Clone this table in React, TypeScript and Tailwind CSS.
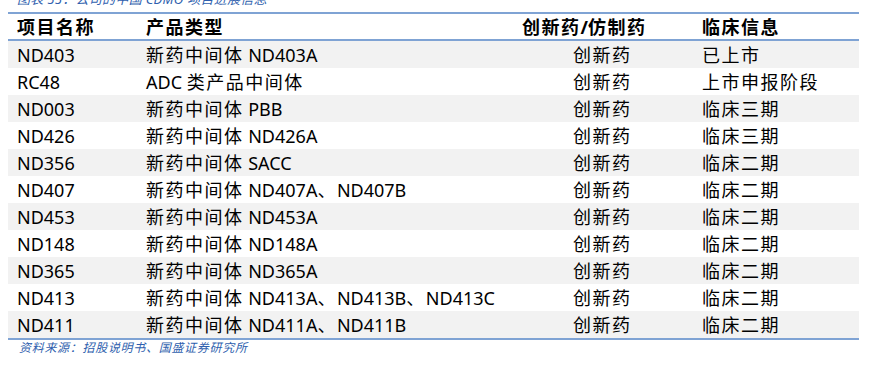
const CJK = /([\u2E80-\u9FFF\u3000-\u303F\uFF00-\uFFEF]+)/;

function T({ s }: { s: string }) {
  return (
    <>
      {s.split(CJK).map((part, i) =>
        CJK.test(part) ? (
          <span key={i} className="tracking-[1.5px]">{part}</span>
        ) : (
          part
        )
      )}
    </>
  );
}

const rows: [string, string, string][] = [
  ["ND403", "新药中间体 ND403A", "已上市"],
  ["RC48", "ADC 类产品中间体", "上市申报阶段"],
  ["ND003", "新药中间体 PBB", "临床三期"],
  ["ND426", "新药中间体 ND426A", "临床三期"],
  ["ND356", "新药中间体 SACC", "临床二期"],
  ["ND407", "新药中间体 ND407A、ND407B", "临床二期"],
  ["ND453", "新药中间体 ND453A", "临床二期"],
  ["ND148", "新药中间体 ND148A", "临床二期"],
  ["ND365", "新药中间体 ND365A", "临床二期"],
  ["ND413", "新药中间体 ND413A、ND413B、ND413C", "临床二期"],
  ["ND411", "新药中间体 ND411A、ND411B", "临床二期"],
];

export default function App() {
  return (
    <div className="h-[369px] w-[874px] overflow-hidden bg-white font-['Noto_Sans','Noto_Sans_CJK_SC',sans-serif] text-black">
      {/* caption is cut at the top edge in the source */}
      <div className="h-[12px] overflow-hidden">
        <p className="-mt-[9px] pl-[17px] text-[13px] leading-[16px] italic tracking-[0.3px] text-[#2f5fae]">
          图表 55：公司的中国 CDMO 项目进展信息
        </p>
      </div>

      <div className="ml-[8px] w-[851px]">
        <div className="grid h-[29px] grid-cols-[129px_363px_193px_166px] items-center border-y-2 border-[#7fa3d4] text-[18px] font-bold leading-none">
          <div className="pl-[9px]"><T s="项目名称" /></div>
          <div className="pl-[9px]"><T s="产品类型" /></div>
          <div className="pl-[22px]"><T s="创新药/仿制药" /></div>
          <div className="pl-[9px]"><T s="临床信息" /></div>
        </div>

        <div className="border-b-2 border-[#7fa3d4]">
          {rows.map(([name, type, stage], i) => (
            <div
              key={name}
              className={`grid h-[27px] grid-cols-[129px_363px_193px_166px] items-center text-[18px] leading-none ${i % 2 === 0 ? "bg-[#f2f2f2]" : "bg-white"}`}
            >
              <div className="pl-[9px]">{name}</div>
              <div className="pl-[9px]"><T s={type} /></div>
              <div className="pl-[73px]"><T s="创新药" /></div>
              <div className="pl-[9px]"><T s={stage} /></div>
            </div>
          ))}
        </div>
      </div>

      <p className="mt-[1px] pl-[19px] text-[12px] leading-[14px] italic tracking-[0.7px] text-[#2f5fae]">
        资料来源：招股说明书、国盛证券研究所
      </p>
    </div>
  );
}
